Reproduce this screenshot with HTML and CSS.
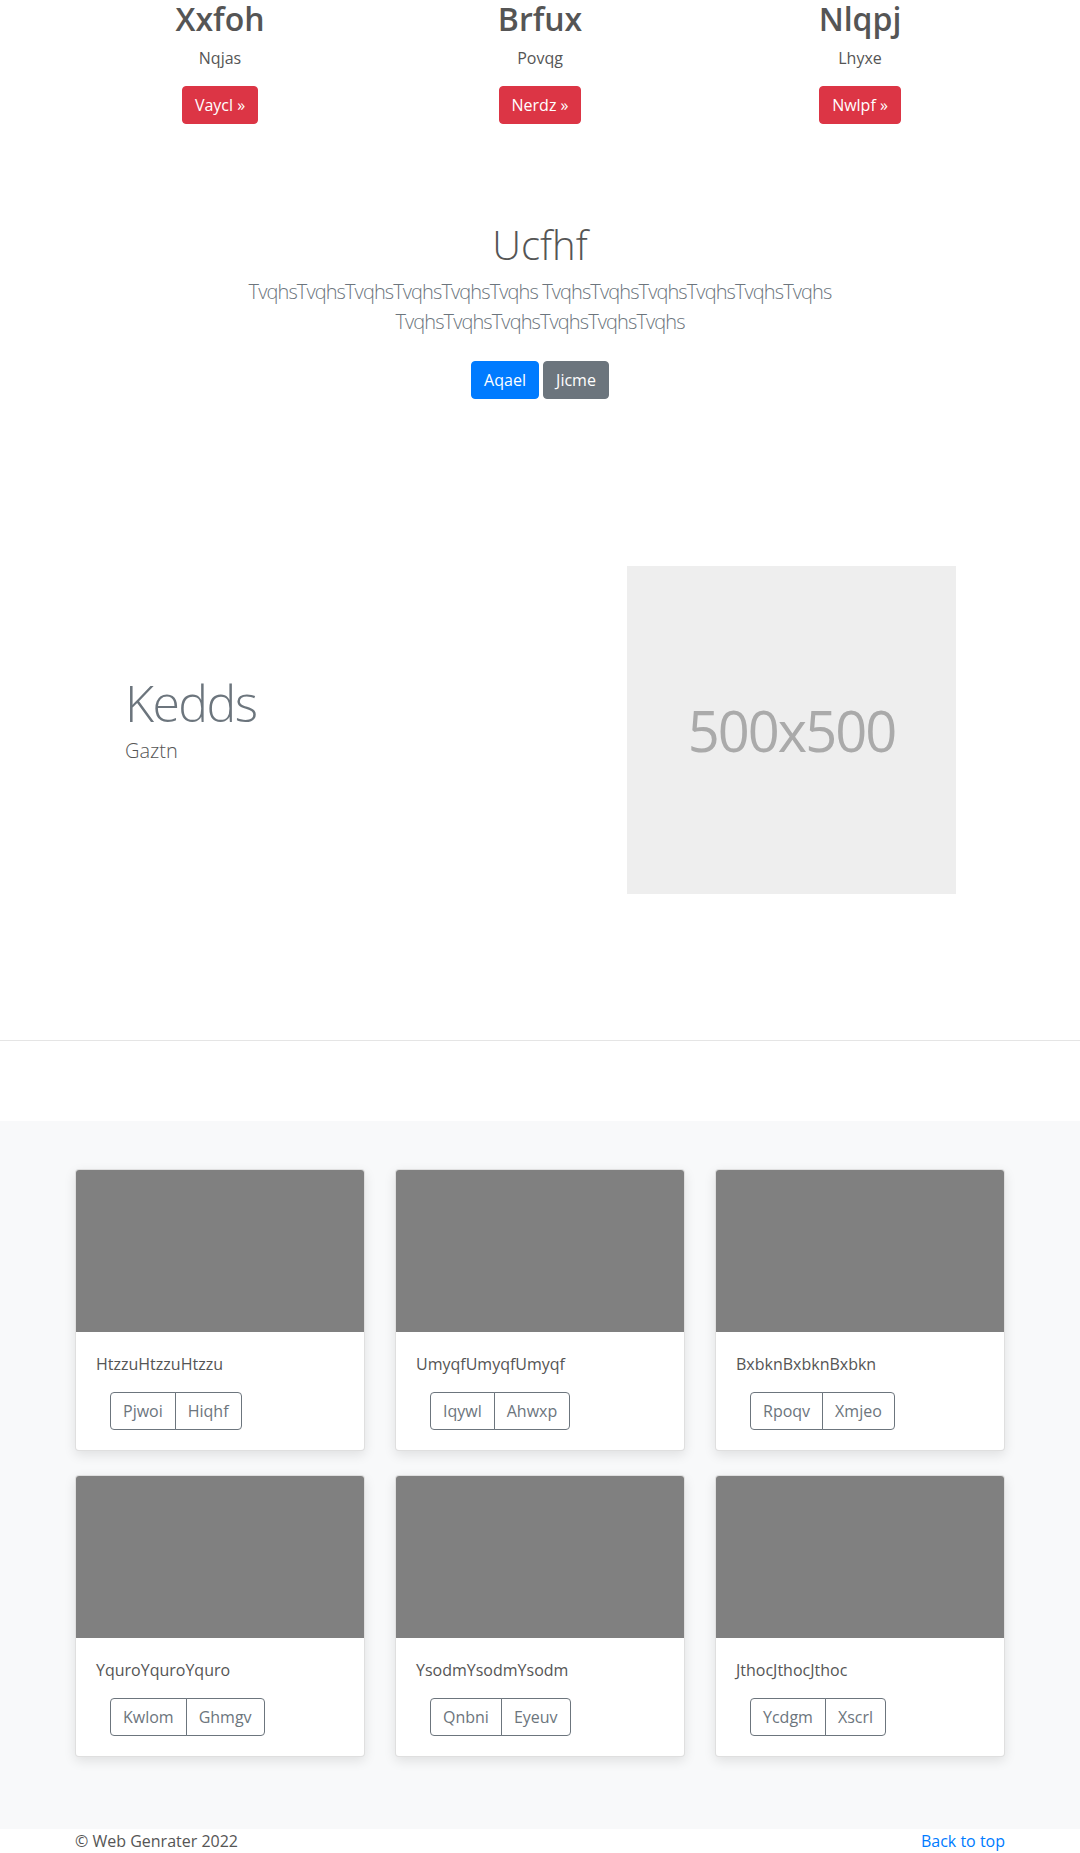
FILE: index.html
```html
<!DOCTYPE html>
<html lang="en">
<head>
  <meta charset="UTF-8">
  <meta name="viewport" content="width=device-width, initial-scale=1.0">
  <title>Web Genrater</title>
  <link rel="stylesheet" href="styles.css">
</head>
<body>
  <!-- Three columns -->
  <div class="container marketing">
    <div class="col-4">
      <h2>Xxfoh</h2>
      <p>Nqjas</p>
      <p><a class="btn btn-danger" href="#">Vaycl &raquo;</a></p>
    </div>
    <div class="col-4">
      <h2>Brfux</h2>
      <p>Povqg</p>
      <p><a class="btn btn-danger" href="#">Nerdz &raquo;</a></p>
    </div>
    <div class="col-4">
      <h2>Nlqpj</h2>
      <p>Lhyxe</p>
      <p><a class="btn btn-danger" href="#">Nwlpf &raquo;</a></p>
    </div>
  </div>

  <!-- Intro -->
  <section class="jumbotron">
    <h1 class="jumbotron-heading">Ucfhf</h1>
    <p class="lead text-muted">TvqhsTvqhsTvqhsTvqhsTvqhsTvqhs TvqhsTvqhsTvqhsTvqhsTvqhsTvqhs TvqhsTvqhsTvqhsTvqhsTvqhsTvqhs</p>
    <p class="jumbo-actions">
      <a href="#" class="btn btn-primary">Aqael</a>
      <a href="#" class="btn btn-secondary">Jicme</a>
    </p>
  </section>

  <!-- Featurette -->
  <div class="featurette">
    <div class="featurette-text">
      <h2 class="featurette-heading">Kedds</h2>
      <p class="lead">Gaztn</p>
    </div>
    <div class="featurette-image">500x500</div>
  </div>

  <hr class="featurette-divider">

  <!-- Album -->
  <div class="album">
    <div class="container card-grid">
      <div class="card">
        <div class="card-img"></div>
        <div class="card-body">
          <p class="card-text">HtzzuHtzzuHtzzu</p>
          <div class="btn-group">
            <button type="button" class="btn btn-outline-secondary">Pjwoi</button>
            <button type="button" class="btn btn-outline-secondary">Hiqhf</button>
          </div>
        </div>
      </div>
      <div class="card">
        <div class="card-img"></div>
        <div class="card-body">
          <p class="card-text">UmyqfUmyqfUmyqf</p>
          <div class="btn-group">
            <button type="button" class="btn btn-outline-secondary">Iqywl</button>
            <button type="button" class="btn btn-outline-secondary">Ahwxp</button>
          </div>
        </div>
      </div>
      <div class="card">
        <div class="card-img"></div>
        <div class="card-body">
          <p class="card-text">BxbknBxbknBxbkn</p>
          <div class="btn-group">
            <button type="button" class="btn btn-outline-secondary">Rpoqv</button>
            <button type="button" class="btn btn-outline-secondary">Xmjeo</button>
          </div>
        </div>
      </div>
      <div class="card">
        <div class="card-img"></div>
        <div class="card-body">
          <p class="card-text">YquroYquroYquro</p>
          <div class="btn-group">
            <button type="button" class="btn btn-outline-secondary">Kwlom</button>
            <button type="button" class="btn btn-outline-secondary">Ghmgv</button>
          </div>
        </div>
      </div>
      <div class="card">
        <div class="card-img"></div>
        <div class="card-body">
          <p class="card-text">YsodmYsodmYsodm</p>
          <div class="btn-group">
            <button type="button" class="btn btn-outline-secondary">Qnbni</button>
            <button type="button" class="btn btn-outline-secondary">Eyeuv</button>
          </div>
        </div>
      </div>
      <div class="card">
        <div class="card-img"></div>
        <div class="card-body">
          <p class="card-text">JthocJthocJthoc</p>
          <div class="btn-group">
            <button type="button" class="btn btn-outline-secondary">Ycdgm</button>
            <button type="button" class="btn btn-outline-secondary">Xscrl</button>
          </div>
        </div>
      </div>
    </div>
  </div>

  <footer class="container footer">
    <p>&copy; Web Genrater 2022</p>
    <a href="#">Back to top</a>
  </footer>
</body>
</html>
```

FILE: styles.css
```css
* { margin: 0; padding: 0; box-sizing: border-box; }
body {
  font-family: 'Open Sans', 'Noto Sans', sans-serif;
  font-size: 16px;
  line-height: 1.5;
  color: #555;
  background-color: #fff;
}
a { color: #007bff; text-decoration: none; }
p { margin-bottom: 16px; }

.container {
  width: 960px;
  margin: 0 auto;
  padding: 0 15px;
}

/* Marketing columns */
.marketing {
  display: flex;
  padding: 0;
  text-align: center;
}
.marketing .col-4 {
  flex: 0 0 320px;
  padding: 0 15px;
}
.marketing h2 {
  font-size: 32px;
  font-weight: 600;
  line-height: 1.2;
  margin-bottom: 8px;
}

/* Buttons */
.btn {
  display: inline-block;
  font-family: inherit;
  font-size: 16px;
  line-height: 1.5;
  padding: 6px 12px;
  border: 1px solid transparent;
  border-radius: 4px;
  color: #fff;
  cursor: pointer;
  background: none;
}
.btn-danger { background-color: #dc3545; border-color: #dc3545; }
.btn-primary { background-color: #007bff; border-color: #007bff; }
.btn-secondary { background-color: #6c757d; border-color: #6c757d; }
.btn-outline-secondary { color: #6c757d; border-color: #6c757d; background-color: transparent; }

/* Intro */
.jumbotron {
  padding-top: 81px;
  text-align: center;
}
.jumbotron-heading {
  font-size: 40px;
  font-weight: 300;
  line-height: 1.2;
  margin-bottom: 8px;
}
.lead {
  font-size: 20px;
  font-weight: 300;
  line-height: 1.5;
}
.jumbotron .lead {
  max-width: 700px;
  margin: 0 auto 16px;
  letter-spacing: -0.9px;
}
.text-muted { color: #6c757d; }
.jumbo-actions .btn { margin-top: 8px; }

/* Featurette */
.featurette {
  display: flex;
  align-items: center;
  width: 960px;
  margin: 167px auto 146px;
  padding: 0 64px 0 65px;
}
.featurette-text { flex: 1; }
.featurette-heading {
  font-size: 50px;
  font-weight: 300;
  line-height: 1;
  letter-spacing: -1.6px;
  color: #6c757d;
  margin-bottom: 8px;
}
.featurette-image {
  width: 329px;
  height: 328px;
  background-color: #eee;
  color: #aaa;
  font-size: 56px;
  letter-spacing: -2px;
  display: flex;
  align-items: center;
  justify-content: center;
}

.featurette-divider {
  border: 0;
  border-top: 1px solid rgba(0, 0, 0, 0.1);
  margin-bottom: 80px;
}

/* Album */
.album {
  background-color: #f8f9fa;
  padding: 48px 0;
}
.card-grid {
  display: grid;
  grid-template-columns: repeat(3, 1fr);
  column-gap: 30px;
  row-gap: 24px;
  padding-bottom: 24px;
}
.card {
  background-color: #fff;
  border: 1px solid rgba(0, 0, 0, 0.125);
  border-radius: 4px;
  overflow: hidden;
  box-shadow: 0 4px 12px rgba(0, 0, 0, 0.1);
}
.card-img {
  height: 162px;
  background-color: #808080;
}
.card-body { padding: 20px; }
.btn-group {
  display: inline-flex;
  margin-left: 14px;
}
.btn-group .btn:first-child { border-radius: 4px 0 0 4px; }
.btn-group .btn:last-child { border-radius: 0 4px 4px 0; margin-left: -1px; }

/* Footer */
.footer {
  display: flex;
  justify-content: space-between;
}
.footer p { margin: 0; }
```
